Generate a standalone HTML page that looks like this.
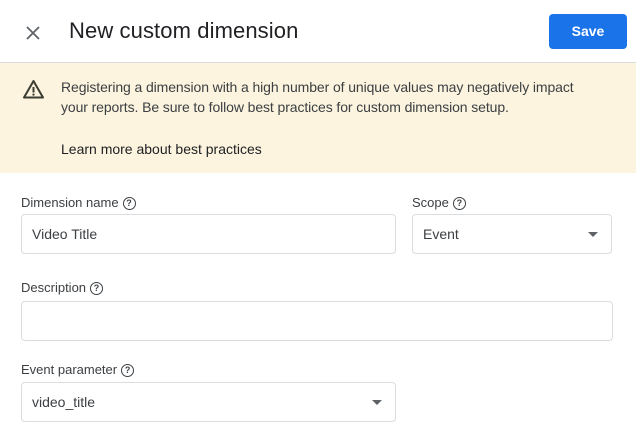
<!DOCTYPE html>
<html><head><style>
*{box-sizing:border-box;margin:0;padding:0}
body{width:636px;height:432px;background:#fff;font-family:"Liberation Sans",Arial,sans-serif;position:relative;overflow:hidden;color:#3c4043}
.abs{position:absolute}
.title{left:69px;top:18px;font-size:22px;color:#202124;letter-spacing:0.1px}
.save{left:549px;top:14px;width:78px;height:35px;background:#1a73e8;border-radius:4px;color:#fff;font-weight:bold;font-size:14px;text-align:center;line-height:35px}
.hr{left:0;top:62px;width:636px;height:1px;background:#dadce0}
.banner{left:0;top:63px;width:636px;height:110px;background:#fcf4df}
.btxt{left:61px;top:77px;font-size:14px;line-height:20px;color:#3c4043;width:535px;letter-spacing:-0.1px}
.learn{left:61px;top:141px;font-size:14px;color:#202124}
.lbl{font-size:13px;color:#3c4043}
.q{display:inline-block;width:13px;height:13px;border:1.5px solid #3c4043;border-radius:50%;font-size:9px;line-height:10px;text-align:center;font-weight:bold;vertical-align:1px;margin-left:4px}
.box{border:1px solid #dadce0;border-radius:4px;background:#fff;font-size:14px;color:#3c4043;padding-left:10px;line-height:38px}
.arr{position:absolute;right:13px;top:17px;width:0;height:0;border-left:5px solid transparent;border-right:5px solid transparent;border-top:5px solid #5f6368}
</style></head><body>
<svg class="abs" style="left:25px;top:25px" width="16" height="16" viewBox="0 0 16 16"><path d="M2 2L14 14M14 2L2 14" stroke="#5f6368" stroke-width="1.8"/></svg>
<div class="abs title">New custom dimension</div>
<div class="abs save">Save</div>
<div class="abs hr"></div>
<div class="abs banner"></div>
<svg class="abs" style="left:22px;top:79px" width="23" height="20" viewBox="0 0 23 20"><path d="M11.5 2L21 18.5H2Z" fill="none" stroke="#3c3c33" stroke-width="2" stroke-linejoin="round"/><path d="M11.5 8v5.5" stroke="#3c3c33" stroke-width="2"/><circle cx="11.5" cy="15.6" r="1.1" fill="#3c3c33"/></svg>
<div class="abs btxt">Registering a dimension with a high number of unique values may negatively impact your reports. Be sure to follow best practices for custom dimension setup.</div>
<div class="abs learn">Learn more about best practices</div>

<div class="abs lbl" style="left:21px;top:195px">Dimension name<span class="q">?</span></div>
<div class="abs box" style="left:21px;top:214px;width:375px;height:40px">Video Title</div>
<div class="abs lbl" style="left:412px;top:195px">Scope<span class="q">?</span></div>
<div class="abs box" style="left:412px;top:214px;width:200px;height:40px">Event<span class="arr"></span></div>

<div class="abs lbl" style="left:21px;top:280px">Description<span class="q">?</span></div>
<div class="abs box" style="left:21px;top:301px;width:592px;height:40px"></div>

<div class="abs lbl" style="left:21px;top:362px">Event parameter<span class="q">?</span></div>
<div class="abs box" style="left:21px;top:382px;width:375px;height:40px">video_title<span class="arr"></span></div>
</body></html>
